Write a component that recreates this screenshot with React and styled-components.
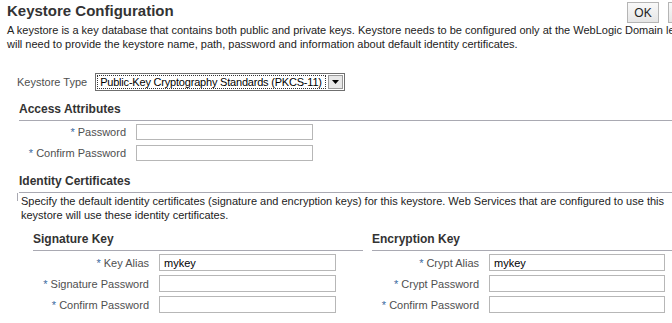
import React from 'react'
import styled, { createGlobalStyle } from 'styled-components'

const GlobalStyle = createGlobalStyle`
  html, body {
    margin: 0;
    padding: 0;
    background: #ffffff;
    overflow: hidden;
  }
  body {
    font-family: "Liberation Sans", Arial, sans-serif;
    font-size: 11px;
    color: #222;
  }
`

const Page = styled.div`
  width: 760px;
  display: flex;
  flex-direction: column;
`

const Header = styled.div`
  display: flex;
  align-items: flex-start;
  padding-left: 7px;
  height: 23px;
`

const Title = styled.h1`
  flex: 1;
  margin: 2px 0 0 0;
  font-size: 15px;
  font-weight: bold;
  color: #333;
  line-height: 18px;
`

const Buttons = styled.div`
  display: flex;
  gap: 9px;
  padding-top: 2px;
  padding-right: 32px;
`

const Button = styled.button`
  box-sizing: border-box;
  height: 21px;
  width: ${p => p.$w || 32}px;
  padding: 0;
  font-family: "Liberation Sans", Arial, sans-serif;
  font-size: 12px;
  color: #222;
  background: linear-gradient(#f9f9f9, #e6e6e6);
  border: 1px solid #b5b5b5;
  border-radius: 0;
`

const Intro = styled.p`
  margin: 0;
  padding-left: 7px;
  line-height: 14px;
  white-space: nowrap;
  color: #222;
`

const TypeRow = styled.div`
  display: flex;
  align-items: center;
  gap: 8px;
  padding-left: 17px;
  margin-top: 22px;
  height: 18px;
`

const Label = styled.span`
  color: #4f4f4f;
  white-space: nowrap;
`

const SelectBox = styled.div`
  display: flex;
  width: 250px;
  height: 18px;
  box-sizing: border-box;
  border: 1px solid #6f6f6f;
  background: #fff;
  padding: 1px;
`

const SelectText = styled.div`
  flex: 1;
  outline: 1px dotted #333;
  outline-offset: -1px;
  padding-left: 3px;
  line-height: 14px;
  font-size: 11px;
  letter-spacing: -0.2px;
  white-space: nowrap;
  overflow: hidden;
  color: #000;
  margin-right: 2px;
`

const SelectArrow = styled.div`
  width: 15px;
  display: flex;
  align-items: center;
  justify-content: center;
  background: #e8e8e8;
  border: 1px solid #9a9a9a;
  box-sizing: border-box;
`

const Section = styled.section`
  display: flex;
  flex-direction: column;
  padding-left: 19px;
  margin-top: ${p => p.$top || 0}px;
`

const SectionTitle = styled.h2`
  margin: 0;
  font-size: 12px;
  font-weight: bold;
  color: #333;
  line-height: 14px;
  padding-bottom: 4px;
  border-bottom: 1px solid #a9a9b2;
`

const Fields = styled.div`
  display: grid;
  grid-template-columns: ${p => p.$label}px auto;
  justify-content: start;
  column-gap: 10px;
  row-gap: ${p => p.$gap}px;
  align-items: center;
  padding-top: ${p => p.$top}px;
`

const FieldLabel = styled.label`
  text-align: right;
  color: #4f4f4f;
  white-space: nowrap;
`

const Req = styled.span`
  color: #3a6aa0;
  margin-right: 3px;
`

const Input = styled.input`
  box-sizing: border-box;
  width: ${p => p.$w}px;
  height: ${p => p.$h}px;
  border: 1px solid #b7b7b7;
  padding: 0 4px;
  font-family: "Liberation Sans", Arial, sans-serif;
  font-size: 11px;
  color: #000;
  outline: none;
`

const Note = styled.p`
  position: relative;
  margin: 0;
  padding: 1px 0 0 2px;
  line-height: 14px;
  white-space: nowrap;
  color: #222;

  &::before {
    content: "";
    position: absolute;
    left: -2px;
    top: 0;
    height: 8px;
    border-left: 1px solid #a9a9b2;
  }
`

const Columns = styled.div`
  display: flex;
  gap: 9px;
  padding-left: 14px;
  margin-top: 10px;
`

const Column = styled.div`
  width: ${p => p.$w}px;
  display: flex;
  flex-direction: column;
`

const Field = ({ label, value, width = 177, height = 17 }) => (
  <>
    <FieldLabel><Req>*</Req>{label}</FieldLabel>
    <Input type="text" defaultValue={value} $w={width} $h={height} />
  </>
)

const App = () => {
  return (
    <Page>
      <GlobalStyle />
      <Header>
        <Title>Keystore Configuration</Title>
        <Buttons>
          <Button $w={32}>OK</Button>
          <Button $w={60}>Cancel</Button>
        </Buttons>
      </Header>
      <Intro>
        A keystore is a key database that contains both public and private keys. Keystore needs to be configured only at the WebLogic Domain level. You
        <br />
        will need to provide the keystore name, path, password and information about default identity certificates.
      </Intro>

      <TypeRow>
        <Label>Keystore Type</Label>
        <SelectBox>
          <SelectText>Public-Key Cryptography Standards (PKCS-11)</SelectText>
          <SelectArrow>
            <svg width="7" height="4" viewBox="0 0 7 4">
              <path d="M0 0h7L3.5 4z" fill="#000" />
            </svg>
          </SelectArrow>
        </SelectBox>
      </TypeRow>

      <Section $top={11}>
        <SectionTitle>Access Attributes</SectionTitle>
        <Fields $label={107} $gap={5} $top={3}>
          <Field label="Password" height={16} />
          <Field label="Confirm Password" height={16} />
        </Fields>
      </Section>

      <Section $top={13}>
        <SectionTitle>Identity Certificates</SectionTitle>
        <Note>
          Specify the default identity certificates (signature and encryption keys) for this keystore. Web Services that are configured to use this
          <br />
          keystore will use these identity certificates.
        </Note>
        <Columns>
          <Column $w={330}>
            <SectionTitle>Signature Key</SectionTitle>
            <Fields $label={116} $gap={4} $top={3}>
              <Field label="Key Alias" value="mykey" />
              <Field label="Signature Password" />
              <Field label="Confirm Password" />
            </Fields>
          </Column>
          <Column $w={300}>
            <SectionTitle>Encryption Key</SectionTitle>
            <Fields $label={107} $gap={4} $top={3}>
              <Field label="Crypt Alias" value="mykey" width={176} />
              <Field label="Crypt Password" width={176} />
              <Field label="Confirm Password" width={176} />
            </Fields>
          </Column>
        </Columns>
      </Section>
    </Page>
  )
}

export default App
